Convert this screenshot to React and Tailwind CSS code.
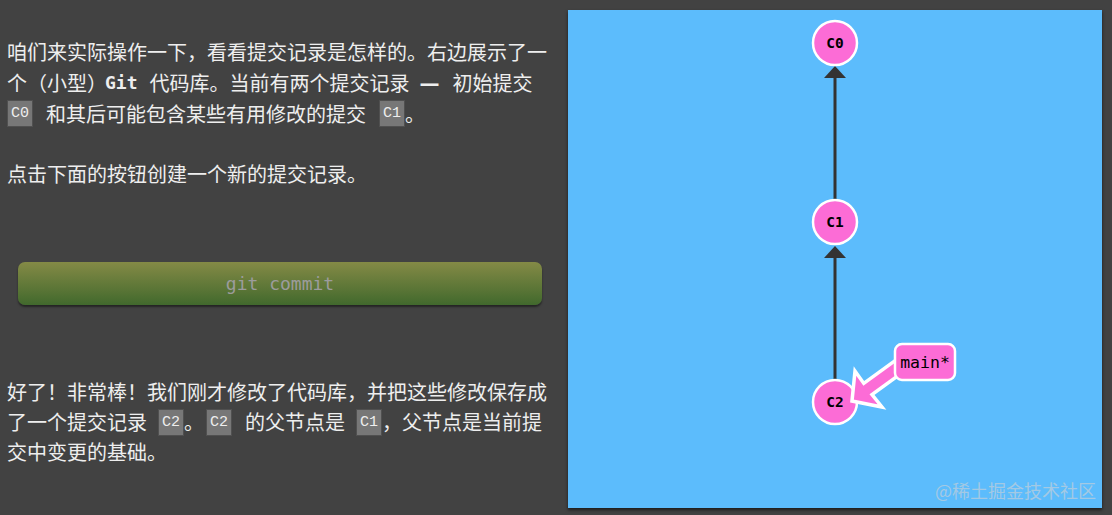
import React from "react";

const cjk = { fontFamily: '"Noto Sans CJK SC", "Noto Sans", sans-serif' };
const monoFam = '"DejaVu Sans Mono", "Liberation Mono", monospace';

function Code({ children, className = "" }) {
  return (
    <span
      className={
        "inline-flex shrink-0 items-center justify-center h-[27px] w-[26px] bg-[#777777] border border-[#505050] text-[#eeeeee] text-[15px] leading-none " +
        className
      }
      style={{ fontFamily: '"Liberation Mono", monospace' }}
    >
      {children}
    </span>
  );
}

function Line({ children, h = "h-[31px]" }) {
  return <div className={"flex items-center whitespace-nowrap " + h}>{children}</div>;
}

function Graph() {
  const pink = "#fc6cd6";
  return (
    <svg width="534" height="498" viewBox="0 0 534 498" className="block">
      <line x1="267" y1="370" x2="267" y2="248" stroke="#333" strokeWidth="3" />
      <polygon points="256,248 278,248 267,236" fill="#333" />
      <line x1="267" y1="190" x2="267" y2="68" stroke="#333" strokeWidth="3" />
      <polygon points="256,68 278,68 267,56" fill="#333" />

      {[33, 212, 392].map((cy, i) => (
        <g key={i}>
          <circle cx="267" cy={cy} r="22" fill={pink} stroke="#fff" strokeWidth="2.5" />
          <text
            x="267"
            y={cy + 5}
            textAnchor="middle"
            fontFamily={monoFam}
            fontWeight="bold"
            fontSize="14.5"
            fill="#000"
          >
            {"C" + i}
          </text>
        </g>
      ))}

      <polygon
        points="284,391 287,361 295.8,373.4 328.8,349.4 337,360.6 304,384.6 314,397"
        fill={pink}
        stroke="#fff"
        strokeWidth="3.5"
        strokeLinejoin="miter"
      />
      <rect x="327" y="334" width="60" height="36" rx="7" fill={pink} stroke="#fff" strokeWidth="2.5" />
      <text x="357" y="358" textAnchor="middle" fontFamily={monoFam} fontSize="16.5" fill="#000">
        main*
      </text>
    </svg>
  );
}

export default function App() {
  return (
    <div className="w-[1112px] h-[515px] bg-[#424242] flex overflow-hidden relative" style={cjk}>
      <div className="w-[568px] shrink-0 pl-[7px] pt-[36px] text-[#eeeeee] text-[20px]">
        <div>
          <Line>咱们来实际操作一下，看看提交记录是怎样的。右边展示了一</Line>
          <Line>
            <span>个（小型）</span>
            <b className="text-[18px] ml-[-2px] mr-[12px]" style={{ fontFamily: monoFam }}>
              Git
            </b>
            <span>代码库。当前有两个提交记录</span>
            <b
              className="ml-[10px] mr-[13px]"
              style={{ fontFamily: '"DejaVu Sans", sans-serif' }}
            >
              —
            </b>
            <span>初始提交</span>
          </Line>
          <Line>
            <Code className="mr-[13px]">C0</Code>
            <span>和其后可能包含某些有用修改的提交</span>
            <Code className="ml-[13px]">C1</Code>
            <span>。</span>
          </Line>
        </div>
        <div className="mt-[29px]">
          <Line>点击下面的按钮创建一个新的提交记录。</Line>
        </div>
        <div className="mt-[73px] ml-[11px] w-[524px] h-[43px] rounded-[7px] bg-gradient-to-b from-[#848a46] to-[#41692d] shadow-[0_2px_2px_rgba(0,0,0,0.45)] flex items-center justify-center">
          <span className="text-[#9c9c9c] text-[18px]" style={{ fontFamily: monoFam }}>
            git commit
          </span>
        </div>
        <div className="mt-[72px]">
          <Line h="h-[30px]">好了！非常棒！我们刚才修改了代码库，并把这些修改保存成</Line>
          <Line h="h-[30px]">
            <span>了一个提交记录</span>
            <Code className="ml-[11px]">C2</Code>
            <span>。</span>
            <Code className="ml-[2px] mr-[13px]">C2</Code>
            <span>的父节点是</span>
            <Code className="ml-[11px]">C1</Code>
            <span>，父节点是当前提</span>
          </Line>
          <Line h="h-[30px]">交中变更的基础。</Line>
        </div>
      </div>
      <div className="mt-[10px] w-[534px] h-[498px] bg-[#5cbcfc] shadow-[0_2px_3px_rgba(0,0,0,0.6)] shrink-0">
        <Graph />
      </div>
      <div
        className="absolute right-[16px] bottom-[16px] text-[18px] leading-none text-[#a3c9e4]"
        style={cjk}
      >
        @稀土掘金技术社区
      </div>
    </div>
  );
}
